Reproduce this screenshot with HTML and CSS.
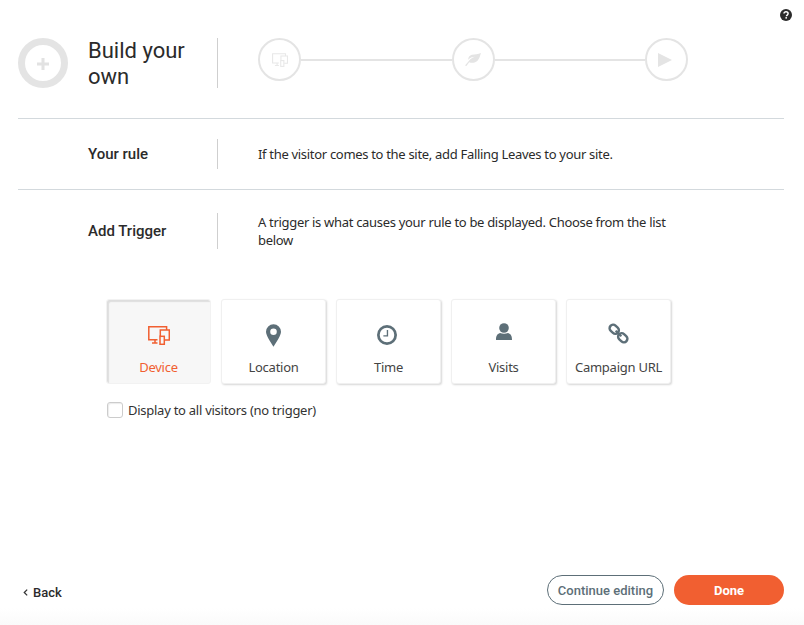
FILE: index.html
```html
<!DOCTYPE html>
<html lang="en">
<head>
<meta charset="utf-8">
<title>Build your own</title>
<link rel="stylesheet" href="styles.css">
</head>
<body>
<div class="page">
  <a class="help" aria-label="Help">
    <svg viewBox="0 0 12 12" width="12" height="12"><circle cx="6" cy="6" r="6" fill="#2b2b2b"/><path d="M4 4.6C4 3.4 4.9 2.8 6 2.8s2.100.7 2.100 1.800c0 1.500-1.600 1.400-1.600 2.600" fill="none" stroke="#fff" stroke-width="1.500"/><rect x="5.400" y="8.100" width="1.600" height="1.500" fill="#fff"/></svg>
  </a>
  <header class="head">
    <div class="plus-ring"><svg class="plus" viewBox="0 0 12 12" width="12" height="12"><path d="M6 0v12M0 6h12" stroke="#e2e2e2" stroke-width="3"/></svg></div>
    <h1 class="title">Build your own</h1>
    <div class="steps">
      <div class="step"><svg viewBox="0 0 22 19" width="16" height="14" fill="none" stroke="#e8e8e8" stroke-width="1.500"><path d="M18.600 3.300V.8H.8V13.700H9.500M4 17H9.500M7 14v3M12.300 10V4h9v10h-4.500"/><rect x="12" y="10.300" width="4.300" height="8"/></svg></div>
      <div class="link"></div>
      <div class="step"><svg viewBox="0 0 16 13" width="16" height="13"><path d="M16 0C14.800 3.500 14 8 9.600 9.500 7.500 10.200 5.600 9.800 4.200 9.200L1.400 13 0 12.400 5.300 6.300C7.300 4.700 9 4.200 10.300 3.800 8 3.800 5.300 4.400 3.300 6.800 3 4.300 4.500 2.400 7 1.800 10 1.100 13 1.600 16 0Z" fill="#e4e4e4"/></svg></div>
      <div class="link"></div>
      <div class="step step-play"><svg viewBox="0 0 14 14" width="14" height="14"><path d="M0 0l14 7-14 7z" fill="#e4e4e4"/></svg></div>
    </div>
  </header>

  <section class="row rule-row">
    <h2 class="row-label">Your rule</h2>
    <p class="row-text">If the visitor comes to the site, add Falling Leaves to your site.</p>
  </section>

  <section class="row trigger-row">
    <h2 class="row-label">Add Trigger</h2>
    <p class="row-text">A trigger is what causes your rule to be displayed. Choose from the list below</p>
  </section>

  <div class="cards">
    <button class="card active">
      <span class="ico-box"><svg viewBox="0 0 22 19" width="22" height="19" fill="none" stroke="#f15f31" stroke-width="1.500"><path d="M18.600 3.300V.8H.8V13.700H9.500M4 17H9.500M7 14v3M12.300 10V4h9v10h-4.500"/><rect x="12" y="10.300" width="4.300" height="8"/></svg></span>
      <span class="card-label">Device</span>
    </button>
    <button class="card">
      <span class="ico-box"><svg viewBox="0 0 16 24" width="15" height="23"><path fill-rule="evenodd" d="M8 0a8 8 0 0 1 8 8c0 4-5 11-8 16C5 19 0 12 0 8a8 8 0 0 1 8-8Zm0 4.500a3.500 3.500 0 1 0 0 7 3.500 3.500 0 0 0 0-7Z" fill="#5d6f78"/></svg></span>
      <span class="card-label">Location</span>
    </button>
    <button class="card">
      <span class="ico-box ico-time"><svg viewBox="0 0 22 22" width="20" height="20" fill="none" stroke="#5d6f78"><circle cx="11" cy="11" r="9.500" stroke-width="3"/><path d="M11.500 5.500V12H7" stroke-width="1.500"/></svg></span>
      <span class="card-label">Time</span>
    </button>
    <button class="card">
      <span class="ico-box ico-top"><svg viewBox="0 0 16 17" width="16" height="17"><circle cx="8" cy="5" r="4.800" fill="#5d6f78"/><path d="M0 17c0-4 1-6 4-7 2.500 1 5.500 1 8 0 3 1 4 3 4 7Z" fill="#5d6f78"/></svg></span>
      <span class="card-label">Visits</span>
    </button>
    <button class="card">
      <span class="ico-box ico-top ico-link"><svg viewBox="0 0 22 22" width="21" height="21" fill="none" stroke="#5d6f78" stroke-width="2.600"><rect x="1.300" y="2.800" width="10.500" height="7.400" rx="3.700" transform="rotate(42 6.500 6.500)"/><rect x="10.200" y="11.800" width="10.500" height="7.400" rx="3.700" transform="rotate(42 15.500 15.500)"/><path d="M8 8l6 6" stroke-width="2.200"/></svg></span>
      <span class="card-label">Campaign URL</span>
    </button>
  </div>

  <label class="all-visitors"><span class="box"></span>Display to all visitors (no trigger)</label>

  <footer class="foot">
    <a class="back"><svg viewBox="0 0 6 8" width="5" height="7" fill="none" stroke="#333" stroke-width="1.500"><path d="M5 .5 1.500 4 5 7.500"/></svg>Back</a>
    <div class="actions">
      <button class="btn ghost">Continue editing</button>
      <button class="btn primary">Done</button>
    </div>
  </footer>
</div>
</body>
</html>
```

FILE: styles.css
```css
* { box-sizing: border-box; }
html, body { margin: 0; height: 100%; }
body {
  background: #fff;
  color: #2b2b2b;
  font-family: "Noto Sans", "Open Sans", sans-serif;
  overflow: hidden;
}
.page {
  position: relative;
  width: 804px;
  height: 625px;
  padding: 38px 20px 0 18px;
  display: flex;
  flex-direction: column;
  background: linear-gradient(to bottom, #fff 0, #fff 608px, #fafafa 625px);
}
.help { position: absolute; top: 9px; right: 12px; line-height: 0; }

.head {
  display: flex;
  align-items: flex-start;
  height: 81px;
  border-bottom: 1px solid #d3d9dd;
}
.plus-ring {
  width: 50px; height: 50px;
  border: 7px solid #e4e4e4;
  border-radius: 50%;
  display: flex; align-items: center; justify-content: center;
  flex: none;
}
.plus { margin-top: 2px; }
.title {
  margin: 0 0 0 20px;
  width: 130px;
  height: 50px;
  padding-right: 20px;
  border-right: 1px solid #cfcfcf;
  font: 400 22px/26px Roboto, sans-serif;
  color: #2b2b2b;
}
.steps {
  margin-left: 40px;
  display: flex;
  align-items: center;
  width: 430px;
}
.step {
  width: 43px; height: 43px; flex: none;
  border: 2px solid #e4e4e4;
  border-radius: 50%;
  display: flex; align-items: center; justify-content: center;
}
.step-play { padding-right: 3px; }
.link { flex: 1; height: 2px; background: #e4e4e4; }

.row {
  display: flex;
  align-items: center;
  padding-left: 70px;
}
.rule-row { height: 71px; border-bottom: 1px solid #d3d9dd; }
.trigger-row { margin-top: 23px; height: 36px; }
.row-label {
  margin: 0;
  width: 130px;
  height: 100%;
  display: flex; align-items: center;
  border-right: 1px solid #cfcfcf;
  font: 500 15px/20px Roboto, sans-serif;
  color: #2b2b2b;
  flex: none;
}
.rule-row .row-label { height: 30px; }
.row-text {
  margin: 0 0 0 40px;
  width: 420px;
  font: 400 13px/18px "Noto Sans", sans-serif;
  letter-spacing: -0.31px;
  color: #2b2b2b;
}

.cards {
  display: flex;
  gap: 10px;
  margin: 50px 0 0 88px;
}
.card {
  width: 105px;
  height: 85px;
  padding: 23px 0 0;
  background: #fff;
  border: 1px solid #f0f0f0;
  border-radius: 3px;
  box-shadow: 1px 1px 2px rgba(0,0,0,.16);
  display: flex; flex-direction: column; align-items: center;
  font: 400 13px/16px "Noto Sans", sans-serif;
  letter-spacing: -0.25px;
  color: #444;
}
.ico-box { height: 24px; display: flex; align-items: center; justify-content: center; }
.ico-top { align-items: flex-start; }
.ico-time { padding-right: 4px; }
.ico-link { padding-right: 1px; }
.card-label { margin-top: 12px; white-space: nowrap; }
.card.active {
  background: #f7f7f7;
  color: #f15f31;
  border-color: #f2f2f2;
  box-shadow: inset 2px 2px 1px #dedede;
}
.all-visitors {
  display: flex; align-items: center;
  height: 16px;
  margin: 18px 0 0 89px;
  font: 400 13px/16px "Noto Sans", sans-serif;
  letter-spacing: -0.26px;
  color: #333;
}
.box {
  width: 16px; height: 16px;
  margin-right: 5px;
  background: #fff;
  border: 1px solid #ccc;
  border-radius: 3px;
  box-shadow: inset 1px 1px 1px rgba(0,0,0,.08);
}

.foot {
  margin-top: auto;
  margin-bottom: 20px;
  display: flex;
  justify-content: space-between;
  align-items: center;
}
.back {
  display: flex; align-items: center; gap: 5px;
  margin: 5px 0 0 5px;
  font: 500 13px/16px Roboto, sans-serif;
  color: #2b2b2b;
}
.actions { display: flex; gap: 10px; }
.btn {
  height: 30px;
  border-radius: 15px;
  font: 500 13px/16px Roboto, sans-serif;
  padding: 1px 0 0;
}
.ghost { width: 117px; background: #fff; border: 1px solid #5d6f78; color: #5d6f78; }
.primary { width: 110px; background: #f15f31; border: 0; color: #fff; font-weight: 700; }
```
